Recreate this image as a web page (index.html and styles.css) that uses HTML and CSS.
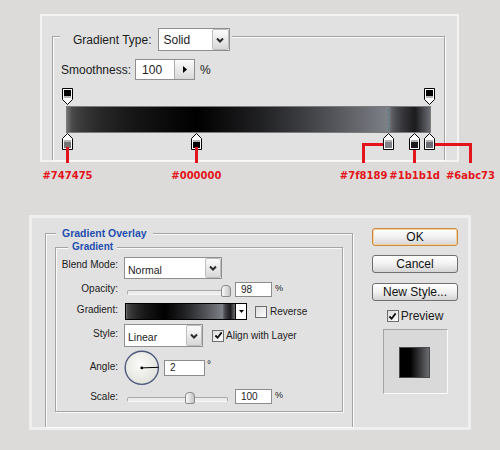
FILE: index.html
```html
<!DOCTYPE html>
<html lang="en">

<head>
    <meta charset="UTF-8">
    <meta name="viewport" content="width=device-width, initial-scale=1.0">
    <title>Gradient Overlay</title>
    <link rel="stylesheet" href="styles.css">
</head>

<body>
    <!-- shared shapes for stops, arrows and ticks -->
    <svg class="defs" aria-hidden="true">
        <symbol id="stop-top" viewBox="0 0 11 17">
            <path d="M0.5 0.5 H10.5 V11.5 L5.5 16.5 L0.5 11.5 Z" fill="#fff" stroke="#000" />
            <rect x="2" y="2" width="7" height="6" fill="#000" />
            <rect x="2" y="8" width="7" height="2" fill="#b4b4b4" />
        </symbol>
        <symbol id="stop-bottom" viewBox="0 0 11 17">
            <path d="M5.5 0.5 L10.5 5.5 V16.5 H0.5 V5.5 Z" fill="#fff" stroke="#000" />
            <rect x="2" y="7" width="7" height="2" fill="#b4b4b4" />
            <rect x="2" y="9" width="7" height="6" />
        </symbol>
        <symbol id="chev" viewBox="0 0 8 6">
            <polyline points="1,1.5 4,4.5 7,1.5" fill="none" stroke="#2a2a2a" stroke-width="2" />
        </symbol>
        <symbol id="tick" viewBox="0 0 10 10">
            <polyline points="1.5,5 4,7.5 8.5,1.5" fill="none" stroke="#111" stroke-width="2" />
        </symbol>
    </svg>

    <div class="panel panel-top">
        <div class="frame frame-top">
            <div class="legend legend-type">
                <span>Gradient Type:</span>
                <div class="select select-solid">
                    <span>Solid</span>
                    <i class="drop"><svg><use href="#chev" /></svg></i>
                </div>
            </div>

            <div class="smooth">
                <span>Smoothness:</span>
                <div class="spin">
                    <span>100</span>
                    <i class="spin-btn"><svg viewBox="0 0 4 7"><path d="M0 0 L4 3.5 L0 7 Z" fill="#000" /></svg></i>
                </div>
                <span class="pct">%</span>
            </div>

            <div class="editor">
                <div class="stop-row stop-row-top">
                    <svg class="stop" style="left: 0%"><use href="#stop-top" /></svg>
                    <svg class="stop" style="left: 100%"><use href="#stop-top" /></svg>
                </div>
                <div class="ramp"><i class="midline"></i></div>
                <div class="stop-row">
                    <div class="stop" style="left: 0%">
                        <svg><use href="#stop-bottom" fill="#747475" /></svg>
                        <i class="callout callout-down"><span>#747475</span></i>
                    </div>
                    <div class="stop" style="left: 35.6%">
                        <svg><use href="#stop-bottom" fill="#000000" /></svg>
                        <i class="callout callout-down"><span>#000000</span></i>
                    </div>
                    <div class="stop" style="left: 88.7%">
                        <svg><use href="#stop-bottom" fill="#7f8189" /></svg>
                        <i class="callout callout-left"><span>#7f8189</span></i>
                    </div>
                    <div class="stop" style="left: 95.9%">
                        <svg><use href="#stop-bottom" fill="#1b1b1d" /></svg>
                        <i class="callout callout-down callout-short"><span>#1b1b1d</span></i>
                    </div>
                    <div class="stop" style="left: 100%">
                        <svg><use href="#stop-bottom" fill="#6a6c73" /></svg>
                        <i class="callout callout-right"><span>#6abc73</span></i>
                    </div>
                </div>
            </div>
        </div>
    </div>

    <div class="panel panel-fx">
        <div class="frame frame-fx">
            <div class="legend legend-fx">Gradient Overlay</div>

            <div class="frame frame-grad">
                <div class="legend legend-grad">Gradient</div>

                <div class="field f-blend">
                    <label>Blend Mode:</label>
                    <div class="select select-blend">
                        <span>Normal</span>
                        <i class="drop"><svg><use href="#chev" /></svg></i>
                    </div>
                </div>

                <div class="field f-opacity">
                    <label>Opacity:</label>
                    <div class="slider"><i class="thumb" style="left: 98%"></i></div>
                    <span class="num">98</span>
                    <span class="unit">%</span>
                </div>

                <div class="field f-gradient">
                    <label>Gradient:</label>
                    <div class="swatch"></div>
                    <i class="swatch-drop"><svg viewBox="0 0 5 3"><path d="M0 0 H5 L2.5 3 Z" fill="#000" /></svg></i>
                    <span class="check"></span>
                    <span class="check-text">Reverse</span>
                </div>

                <div class="field f-style">
                    <label>Style:</label>
                    <div class="select select-style">
                        <span>Linear</span>
                        <i class="drop"><svg><use href="#chev" /></svg></i>
                    </div>
                    <span class="check check-align"><svg><use href="#tick" /></svg></span>
                    <span class="check-text">Align with Layer</span>
                </div>

                <div class="field f-angle">
                    <label>Angle:</label>
                    <svg class="dial" viewBox="0 0 36 36">
                        <defs>
                            <radialGradient id="dial-face" cx="45%" cy="40%" r="60%">
                                <stop offset="0" stop-color="#fbfbf9" />
                                <stop offset="1" stop-color="#e2e2dc" />
                            </radialGradient>
                        </defs>
                        <circle cx="17.8" cy="17.8" r="16.6" fill="url(#dial-face)" stroke="#4d5a7c" stroke-width="1.4" />
                        <line x1="17.8" y1="17.9" x2="34.6" y2="17.3" stroke="#000" stroke-width="1" />
                        <circle cx="17.8" cy="17.9" r="1.4" fill="#000" />
                    </svg>
                    <span class="num num-angle">2</span>
                    <span class="deg">°</span>
                </div>

                <div class="field f-scale">
                    <label>Scale:</label>
                    <div class="slider"><i class="thumb" style="left: 62%"></i></div>
                    <span class="num">100</span>
                    <span class="unit">%</span>
                </div>
            </div>
        </div>

        <div class="actions">
            <button class="btn btn-ok">OK</button>
            <button class="btn btn-cancel">Cancel</button>
            <button class="btn btn-new">New Style...</button>
            <div class="preview-check">
                <span class="check"><svg><use href="#tick" /></svg></span>
                <span>Preview</span>
            </div>
            <div class="preview">
                <div class="preview-swatch"></div>
            </div>
        </div>
    </div>
</body>

</html>
```

FILE: styles.css
```css
* {
    box-sizing: border-box;
}

:root {
    --ramp: linear-gradient(90deg, #747475 0%, 4%, #000 35.6%, 66%, #7f8189 88.7%, 90.5%, #1b1b1d 95.9%, #6a6c73 100%);
    --red: #e3141c;
}

body {
    margin: 0;
    padding-top: 14px;
    background-color: #dcdbd9;
    font-family: "Liberation Sans", Arial, sans-serif;
    color: #1c1c1c;
}

.defs {
    position: absolute;
    width: 0;
    height: 0;
}

.panel {
    display: flex;
    background-color: #e1e1e1;
}

/* etched group box */
.frame {
    display: flex;
    flex-direction: column;
    align-items: flex-start;
    border: 1px solid #a4a4a4;
    box-shadow: inset 1px 1px 0 #fafafa, 1px 1px 0 #fafafa;
}

.legend {
    display: flex;
    align-items: center;
    background-color: #e1e1e1;
}

/* ---------- gradient editor ---------- */

.panel-top {
    width: 419px;
    height: 148px;
    margin-left: 40px;
    padding: 20px 12px 0 10px;
    border: 2px solid #f3f3f3;
    font-size: 12px;
}

.frame-top {
    flex: 1;
    border-bottom: 0;
}

.legend-type {
    height: 23px;
    margin: -9px 0 0 7px;
    padding: 0 2px 0 13px;
    gap: 6px;
}

.select {
    display: flex;
    align-items: center;
    background-color: #fff;
    border: 1px solid #8f8f8f;
}

.select span {
    padding-left: 5px;
}

.drop {
    display: flex;
    align-items: center;
    justify-content: center;
    align-self: stretch;
    width: 17px;
    margin-left: auto;
    border: 1px solid #bdbdbd;
    border-radius: 2px;
    background-image: linear-gradient(#fbfbfb, #d8d8d8);
}

.drop svg {
    width: 8px;
    height: 6px;
}

.select-solid {
    width: 72px;
    height: 23px;
}

.smooth {
    display: flex;
    align-items: center;
    gap: 4px;
    margin: 8px 0 0 8px;
}

.spin {
    display: flex;
    align-items: center;
    width: 60px;
    height: 21px;
    background-color: #fff;
    border: 1px solid #8f8f8f;
}

.spin span {
    padding-left: 6px;
}

.spin-btn {
    display: flex;
    align-items: center;
    justify-content: center;
    align-self: stretch;
    width: 20px;
    margin-left: auto;
    border-left: 1px solid #ababab;
    background-image: linear-gradient(#fbfbfb, #d8d8d8);
}

.spin-btn svg {
    width: 4px;
    height: 7px;
}

.pct {
    margin-left: 1px;
}

.editor {
    width: 365px;
    margin: 8px 0 0 13px;
}

.stop-row {
    position: relative;
    height: 17px;
    margin: 0 2px 0 1px;
}

.stop-row-top {
    height: 18px;
}

.stop {
    position: absolute;
    top: 0;
    width: 11px;
    height: 17px;
    margin-left: -5px;
}

.stop svg {
    display: block;
    width: 11px;
    height: 17px;
}

.ramp {
    position: relative;
    height: 27px;
    border: 1px solid #7c7c7c;
    background-image: var(--ramp);
}

.midline {
    position: absolute;
    left: 88.5%;
    top: 2px;
    bottom: 2px;
    border-left: 1px dashed #4f8088;
}

/* red hex callouts under the stops */
.callout {
    position: absolute;
    border: 0 solid var(--red);
}

.callout span {
    position: absolute;
    top: calc(100% + 7px);
    left: -1.5px;
    transform: translateX(-50%);
    font: bold 10px/12px "DejaVu Sans", Verdana, sans-serif;
    color: var(--red);
    white-space: nowrap;
}

.callout-down {
    left: 4px;
    top: 14px;
    height: 16px;
    border-left-width: 3px;
}

.callout-short {
    top: 17px;
    height: 13px;
}

.callout-left {
    left: -21px;
    top: 10px;
    width: 21px;
    height: 20px;
    border-left-width: 3px;
    border-top-width: 3px;
}

.callout-right {
    left: 11px;
    top: 10px;
    width: 37px;
    height: 20px;
    border-right-width: 3px;
    border-top-width: 3px;
}

.callout-right span {
    left: calc(100% + 1.5px);
}

/* ---------- layer style dialog ---------- */

.panel-fx {
    width: 442px;
    height: 215px;
    margin: 53px 0 0 29px;
    padding: 10px 10px 0 13px;
    border: 3px solid #efefef;
    font-size: 10px;
}

.frame-fx {
    width: 308px;
    margin-top: 5px;
    border-bottom: 0;
}

.legend-fx {
    height: 12px;
    margin: -7px 0 0 10px;
    padding: 0 6px;
    font-size: 10.5px;
    font-weight: bold;
    line-height: 12px;
    color: #1f4eaf;
}

.frame-grad {
    width: 288px;
    margin: 8px 0 0 9px;
    padding-bottom: 7px;
}

.legend-grad {
    height: 12px;
    margin: -7px 0 0 12px;
    padding: 0 4px;
    font-weight: bold;
    line-height: 12px;
    color: #1f4eaf;
}

.field {
    display: flex;
    align-items: center;
}

.field label {
    align-self: stretch;
    display: flex;
    align-items: center;
    justify-content: flex-end;
    width: 62px;
    margin-right: 6px;
}

.f-blend {
    height: 22px;
    margin-top: 4px;
}

.f-blend label {
    padding-bottom: 7px;
}

.f-opacity {
    height: 15px;
    margin-top: 3px;
}

.f-opacity label {
    padding-bottom: 2px;
}

.f-gradient {
    height: 17px;
    margin-top: 6px;
}

.f-gradient label {
    padding-bottom: 4px;
}

.f-style {
    height: 23px;
    margin-top: 4px;
}

.f-style label {
    padding-bottom: 5px;
}

.f-angle {
    height: 35px;
    margin-top: 3px;
}

.f-angle label {
    padding-bottom: 3px;
}

.f-scale {
    height: 15px;
    margin-top: 4px;
}

.f-scale label {
    padding-bottom: 1px;
}

.select-blend {
    width: 98px;
    height: 22px;
    font-size: 10.5px;
}

.select-blend span,
.select-style span {
    padding: 3px 0 0 3px;
}

.select-blend .drop,
.select-style .drop {
    width: 16px;
}

.select-style {
    width: 79px;
    height: 23px;
    font-size: 10.5px;
}

.slider {
    position: relative;
    width: 101px;
    height: 15px;
    margin-left: 3px;
}

.slider::before {
    content: "";
    position: absolute;
    left: 0;
    right: 0;
    top: 8px;
    height: 3px;
    border: 1px solid #a9a9a9;
    border-bottom-color: #f8f8f8;
    border-radius: 2px;
    background-color: #ececec;
}

.thumb {
    position: absolute;
    top: 3px;
    width: 10px;
    height: 12px;
    margin-left: -5px;
    border: 1px solid #8a8a8a;
    border-radius: 4px 4px 2px 2px;
    background-image: linear-gradient(90deg, #fafafa, #c4c4c4);
}

.num {
    width: 37px;
    height: 15px;
    margin-left: 7px;
    padding-left: 5px;
    line-height: 13px;
    background-color: #fff;
    border: 1px solid #8c8c8c;
}

.unit {
    margin-left: 3px;
    margin-bottom: 3px;
    font-size: 9px;
}

.swatch {
    width: 110px;
    height: 17px;
    margin-left: 1px;
    border: 1px solid #000;
    border-right: 0;
    background-image: var(--ramp);
}

.swatch-drop {
    display: flex;
    align-items: center;
    justify-content: center;
    width: 12px;
    height: 17px;
    background-color: #fff;
    border: 1px solid #000;
}

.swatch-drop svg {
    width: 5px;
    height: 3px;
}

.check {
    display: flex;
    align-items: center;
    justify-content: center;
    width: 12px;
    height: 12px;
    border: 1px solid #6e6e6e;
    background-image: linear-gradient(135deg, #dcdcdc, #fff);
}

.check svg {
    width: 9px;
    height: 9px;
}

.f-gradient .check {
    margin-left: 8px;
}

.check-align {
    margin-left: 9px;
}

.check-text {
    margin-left: 3px;
}

.check-align+.check-text {
    margin-left: 2px;
}

.dial {
    width: 36px;
    height: 36px;
}

.num-angle {
    width: 41px;
    height: 16px;
    margin-left: 4px;
    line-height: 14px;
}

.deg {
    align-self: flex-start;
    margin: 9px 0 0 2px;
}

/* right column */
.actions {
    display: flex;
    flex-direction: column;
    align-items: center;
    width: 86px;
    margin-left: 19px;
    font-size: 12px;
}

.btn {
    width: 86px;
    height: 18px;
    padding: 0;
    font: inherit;
    color: #111;
    border: 1px solid #6f6f6f;
    border-radius: 3px;
    background-image: linear-gradient(#ffffff, #f1f1f1 50%, #d4d4d4);
}

.btn-ok {
    border-color: #c98a3e;
    box-shadow: inset 0 0 0 1px #f4d19f;
}

.btn-cancel {
    margin-top: 9px;
}

.btn-new {
    margin-top: 10px;
}

.preview-check {
    display: flex;
    align-items: center;
    gap: 2px;
    margin-top: 9px;
    height: 12px;
}

.preview {
    display: flex;
    align-items: center;
    justify-content: center;
    width: 65px;
    height: 65px;
    margin-top: 7px;
    border: 1px solid;
    border-color: #a4a4a4 #fbfbfb #fbfbfb #a4a4a4;
    background-color: #d9d9d9;
}

.preview-swatch {
    width: 31px;
    height: 31px;
    margin: 2px 2px 0 0;
    border: 1px solid #4a4a4a;
    background-image: linear-gradient(90deg, #000 35%, #6b6c71);
}
```
